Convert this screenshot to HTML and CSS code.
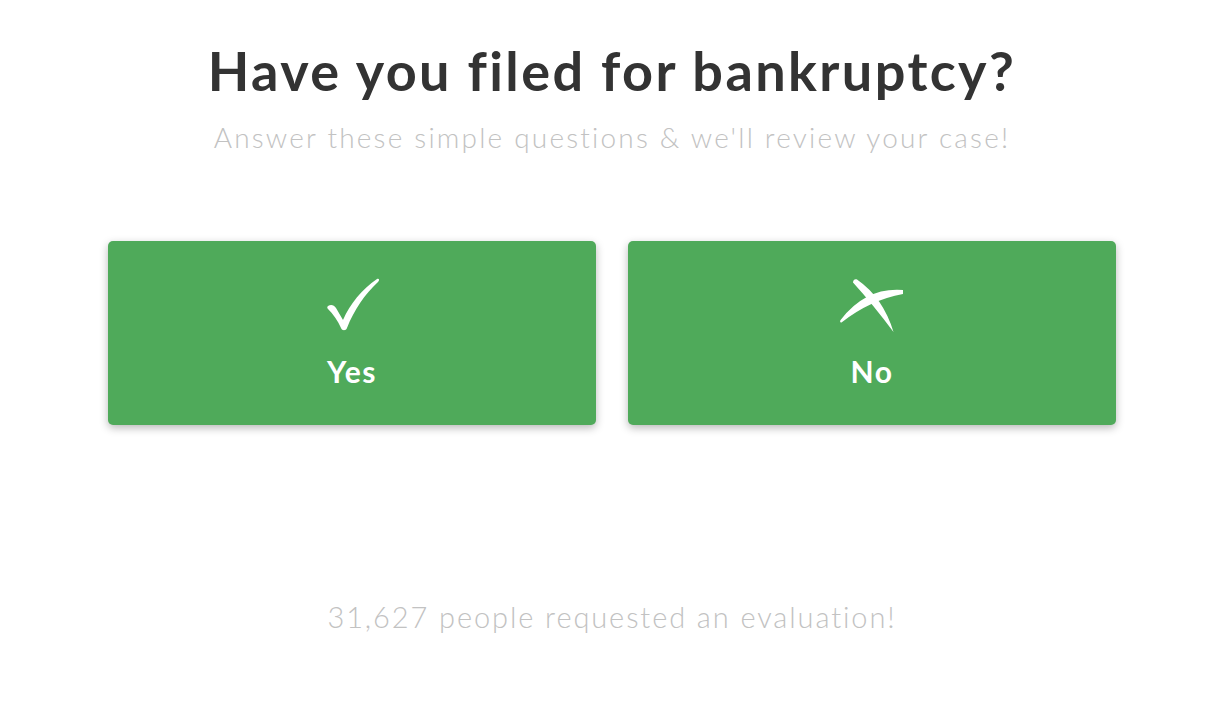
FILE: index.html
```html
<!DOCTYPE html>
<html>
<head>
<meta charset="utf-8">
<link rel="stylesheet" href="styles.css">
</head>
<body>
<main class="page">
  <h1 class="title">Have you filed for bankruptcy?</h1>
  <p class="subtitle">Answer these simple questions &amp; we'll review your case!</p>
  <div class="choices">
    <button class="choice">
      <svg class="icon" width="60" height="60" viewBox="0 0 60 60">
        <path transform="translate(3 0)" d="M3 28 C6 26 9 27 11 30 L18 42 C25 26 37 11 52 1 C54 0 55 2 53 4 C40 16 29 32 22 50 C21 53 17 53 16 50 C13 43 8 36 3 31 C2 30 2 29 3 28 Z" fill="#fff"/>
      </svg>
      <span class="label">Yes</span>
    </button>
    <button class="choice">
      <svg class="icon" width="70" height="60" viewBox="0 0 70 60">
        <path d="M16 4.5 C16 1.5 18.5 0.5 20 1.5 Q46 19.5 56.5 54 Q36 26.5 16 4.5 Z" fill="#fff"/>
        <path d="M4 41.5 Q29 9 66 12 L66 16 Q33 22 4.5 44.5 C3 45 2.5 43 4 41.5 Z" fill="#fff"/>
      </svg>
      <span class="label">No</span>
    </button>
  </div>
  <p class="count">31,627 people requested an evaluation!</p>
</main>
</body>
</html>
```
FILE: styles.css
```css
* { box-sizing: border-box; }
html, body { margin: 0; padding: 0; background: #fff; }
body { font-family: "Lato", "Open Sans", sans-serif; }
.page {
  display: flex;
  flex-direction: column;
  align-items: center;
  padding: 38px 4px 0 0;
}
.title {
  margin: 0;
  font-size: 54px;
  font-weight: 700;
  letter-spacing: 2.4px;
  color: #333;
  line-height: 66px;
}
.subtitle {
  margin: 16px 0 0;
  font-size: 28px;
  font-weight: 300;
  letter-spacing: 2.2px;
  color: #c2c2c2;
  line-height: 34px;
}
.choices {
  display: flex;
  gap: 32px;
  margin-top: 87px;
}
.choice {
  width: 488px;
  height: 184px;
  background: #4faa5a;
  border: none;
  border-radius: 5px;
  box-shadow: 0 3px 8px rgba(0,0,0,0.28);
  display: flex;
  flex-direction: column;
  align-items: center;
  justify-content: flex-start;
  padding: 37px 0 0;
  font-family: inherit;
  cursor: pointer;
}
.icon { display: block; }
.label {
  margin-top: 15px;
  font-size: 30px;
  font-weight: 700;
  letter-spacing: 1.5px;
  color: #fff;
  line-height: 36px;
}
.count {
  margin: 174px 0 0;
  font-size: 29px;
  font-weight: 300;
  letter-spacing: 1.9px;
  color: #c2c2c2;
  line-height: 36px;
}
```
